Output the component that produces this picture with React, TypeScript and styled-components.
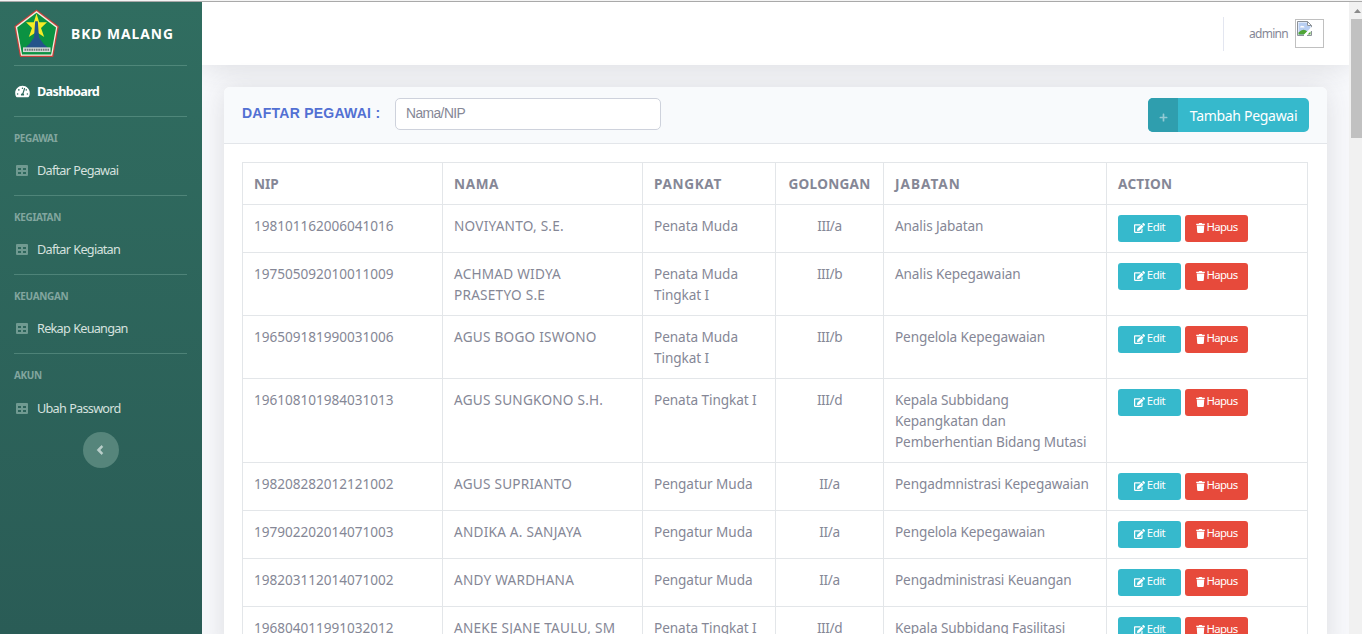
import React from 'react';
import styled, { createGlobalStyle } from 'styled-components';
import { FaTachometerAlt, FaAngleLeft, FaPlus, FaEdit, FaTrash } from 'react-icons/fa';

const GlobalStyle = createGlobalStyle`
  *, *::before, *::after { box-sizing: border-box; }
  html, body { margin: 0; padding: 0; overflow: hidden; }
  body { font-family: 'Noto Sans', 'Segoe UI', sans-serif; color: #858796; background: #f8f9fc; }
`;

const Page = styled.div`
  display: flex;
  width: 1362px;
  height: 634px;
  overflow: hidden;
  border-top: 1px solid #f4f4f4;
`;
const Window = styled.div`
  display: flex;
  flex: 1;
  min-width: 0;
  border-top: 1px solid #a9a9a9;
`;
const Sidebar = styled.nav`
  width: 202px;
  flex: none;
  padding: 0 15px 0 14px;
  color: #fff;
  background: linear-gradient(180deg, #306d60 0%, #2a5c56 100%);
`;
const Brand = styled.div`
  display: flex;
  align-items: center;
  height: 63px;
  gap: 12px;
  font-size: 13.8px;
  font-weight: 700;
  letter-spacing: 1px;
  white-space: nowrap;
`;
const BrandName = styled.span`
  line-height: 20px;
`;
const Divider = styled.div`
  height: 1px;
  background: rgba(140, 190, 175, 0.35);
`;
const NavItem = styled.a<{ $active?: boolean; $height: number }>`
  display: flex;
  align-items: center;
  height: ${(p) => p.$height}px;
  gap: 7px;
  padding-left: 1px;
  padding-bottom: ${(p) => (p.$active ? 0 : 2)}px;
  font-size: 12.7px;
  letter-spacing: ${(p) => (p.$active ? -0.7 : -0.75)}px;
  word-spacing: 0.6px;
  font-weight: ${(p) => (p.$active ? 700 : 400)};
  color: ${(p) => (p.$active ? '#fff' : '#d5e1df')};
  white-space: nowrap;
  svg {
    width: 15px;
    height: 13px;
    margin-top: ${(p) => (p.$active ? 0 : 2)}px;
    flex: none;
    color: ${(p) => (p.$active ? '#fff' : '#709a91')};
  }
`;
const Heading = styled.div`
  padding-top: 14px;
  height: 29px;
  font-size: 10px;
  line-height: 14px;
  font-weight: 700;
  letter-spacing: -0.35px;
  color: #82a69f;
`;
const Toggle = styled.button`
  display: flex;
  align-items: center;
  justify-content: center;
  width: 36px;
  height: 36px;
  margin: -2px auto 0;
  padding: 0 2px 0 0;
  border: 0;
  border-radius: 50%;
  background: #56857b;
  color: #b9cec9;
  svg { stroke: currentColor; stroke-width: 20px; }
`;
const Content = styled.main`
  flex: 1;
  min-width: 0;
  display: flex;
  flex-direction: column;
  background: #f8f9fc;
  overflow: hidden;
`;
const Topbar = styled.header`
  flex: none;
  height: 63px;
  display: flex;
  align-items: center;
  justify-content: flex-end;
  padding-right: 25px;
  background: #fff;
  box-shadow: 0 2px 28px rgba(58, 59, 69, 0.15);
`;
const UserBox = styled.div`
  display: flex;
  align-items: center;
  height: 34px;
  padding-left: 25px;
  gap: 7px;
  border-left: 1px solid #e3e6f0;
  font-size: 12px;
  letter-spacing: -0.72px;
`;
const UserName = styled.span`
  width: 39px;
`;
const Avatar = styled.span`
  width: 29px;
  height: 29px;
  padding: 1px;
  border: 1px solid #c0c0c0;
  svg { display: block; }
`;
const Card = styled.section`
  margin: 22px 22px 0;
  flex: none;
  border-radius: 6px 6px 0 0;
  background: #fff;
  box-shadow: 0 2px 28px rgba(58, 59, 69, 0.15);
`;
const CardHead = styled.div`
  display: flex;
  align-items: flex-start;
  height: 57px;
  padding: 11px 18px 0;
  background: #f8fafc;
  border-bottom: 1px solid #e3e6ea;
  border-radius: 6px 6px 0 0;
`;
const Title = styled.h6`
  margin: 0;
  width: 153px;
  font: 700 14px/31px 'Liberation Sans', Arial, sans-serif;
  letter-spacing: 0.25px;
  color: #5270d3;
  white-space: nowrap;
`;
const Search = styled.input`
  width: 266px;
  height: 32px;
  padding: 0 10px 2px;
  border: 1px solid #ced2dc;
  border-radius: 5px;
  background: #fff;
  font: 400 13.8px 'Liberation Sans', Arial, sans-serif;
  letter-spacing: -0.55px;
  &::placeholder { color: #858796; opacity: 1; }
`;
const AddButton = styled.button`
  display: flex;
  height: 34px;
  width: 161px;
  margin-left: auto;
  padding: 0;
  border: 0;
  border-radius: 5px;
  overflow: hidden;
  background: #36b9cc;
  color: #fff;
  font: 400 14px/36px 'Noto Sans', sans-serif;
  letter-spacing: -0.3px;
`;
const AddIcon = styled.span`
  display: flex;
  align-items: center;
  justify-content: center;
  width: 30px;
  height: 34px;
  padding-top: 5px;
  background: #2f9eae;
  color: #93cad4;
`;
const AddLabel = styled.span`
  flex: 1;
  text-align: center;
`;
const Table = styled.table`
  width: 1066px;
  margin: 18px 0 0 18px;
  table-layout: fixed;
  border-collapse: collapse;
  font-size: 13.6px;
  line-height: 21px;
`;
const Col = styled.col<{ $w: number }>`
  width: ${(p) => p.$w}px;
`;
const Th = styled.th<{ $center?: boolean; $spacing: number }>`
  padding: ${(p) => (p.$center ? '10px 0 10px' : '10px 11px')};
  border: 1px solid #e3e6e9;
  text-align: ${(p) => (p.$center ? 'center' : 'left')};
  letter-spacing: ${(p) => p.$spacing}px;
  font-weight: 700;
  white-space: nowrap;
`;
const Td = styled.td<{ $center?: boolean; $spacing?: number }>`
  padding: 10px 11px;
  border: 1px solid #e3e6e9;
  vertical-align: top;
  text-align: ${(p) => (p.$center ? 'center' : 'left')};
  letter-spacing: ${(p) => p.$spacing ?? 0}px;
  white-space: pre-line;
`;
const Actions = styled.div`
  display: flex;
  gap: 4px;
`;
const ActionButton = styled.button<{ $danger?: boolean }>`
  display: flex;
  align-items: center;
  justify-content: center;
  gap: 2px;
  width: 63px;
  height: 27px;
  padding: 0 0 3px;
  border: 0;
  border-radius: 3px;
  background: ${(p) => (p.$danger ? '#e74a3b' : '#36b9cc')};
  color: #fff;
  font: 400 11.4px/18px 'Noto Sans', sans-serif;
  letter-spacing: ${(p) => (p.$danger ? -0.7 : -0.5)}px;
  svg { width: ${(p) => (p.$danger ? 9 : 11)}px; height: 10px; margin-top: 2px; flex: none; }
`;
const Scrollbar = styled.div`
  width: 13px;
  flex: none;
  padding-left: 2px;
  background: #f1f1f1;
`;
const Arrow = styled.div`
  height: 17px;
  padding: 7px 0 0 3px;
  svg { display: block; }
`;
const Thumb = styled.div`
  height: 119px;
  background: #c1c1c1;
`;

const Logo = () => (
  <svg width="45" height="49" viewBox="0 0 45 48" preserveAspectRatio="none">
    <path d="M22.5 0.5 L44.8 17 L39.2 47 H6 L0.4 17 Z" fill="#c8413c" />
    <path d="M22.5 1.9 L43.4 17.5 L38.2 45.8 H7 L1.7 17.5 Z" fill="#f3eee0" />
    <path d="M22.5 3.6 L42 18.2 L37.1 44.5 H8 L3.2 18.2 Z" fill="#0b9242" />
    <path d="M22.5 4.5 L25.2 13 H33 L27 18.5 L30.2 27.5 L22.5 22.5 L14.8 27.5 L18 18.5 L12 13 H19.8 Z" fill="#f5ec26" />
    <path d="M21.2 12 H23.8 L25 28 L29.5 34 L35 39 H10 L15.5 34 L20 28 Z" fill="#24548a" />
    <rect x="9" y="37.6" width="27.5" height="4.6" fill="#d3dad7" />
    <path d="M10.5 40 H35" stroke="#6e7778" strokeWidth="2" strokeDasharray="1.6 0.7" />
  </svg>
);

const TableIcon = () => (
  <svg viewBox="0 0 15 13">
    <path
      fill="currentColor"
      fillRule="evenodd"
      d="M2 1 H12 Q13 1 13 2 V11 Q13 12 12 12 H2 Q1 12 1 11 V2 Q1 1 2 1 Z M3 4 V6 H6 V4 Z M8 4 V6 H11 V4 Z M3 8 V10 H6 V8 Z M8 8 V10 H11 V8 Z"
    />
  </svg>
);

const BrokenImage = () => (
  <svg width="16" height="16" viewBox="0 0 16 16">
    <path d="M0.5 0.5 H10.5 L14.5 4.5 V14.5 H0.5 Z" fill="#fff" />
    <path d="M1.5 1.5 H10 V5 H13.5 V8 L7.5 14 H1.5 Z" fill="#b9cff3" />
    <path d="M3 6.5 q0.5 -2.5 2.5 -1.5 q2 -0.5 2 1.5 Z" fill="#fff" />
    <path d="M1.5 13.5 V11.5 Q6 6.5 10.5 10.5 L7.5 13.5 Z" fill="#4fa536" />
    <path d="M13.5 10.5 V13.5 H10.5 Z" fill="#4fa536" />
    <path d="M7 14.5 H0.5 V0.5 H10.5 L14.5 4.5 V7 M10 14.5 H14.5 V10" fill="none" stroke="#8c9299" />
    <path d="M10.5 0.5 V4.5 H14.5 Z" fill="#fff" stroke="#8c9299" />
    <path d="M15.5 6.5 L7.5 14.5" stroke="#fff" strokeWidth="2" />
  </svg>
);

const sections = [
  { heading: 'PEGAWAI', item: 'Daftar Pegawai' },
  { heading: 'KEGIATAN', item: 'Daftar Kegiatan' },
  { heading: 'KEUANGAN', item: 'Rekap Keuangan' },
  { heading: 'AKUN', item: 'Ubah Password' },
];

const columns = [
  { label: 'NIP', width: 200, head: 0, body: -0.02 },
  { label: 'NAMA', width: 200, head: 0.6, body: 0.24 },
  { label: 'PANGKAT', width: 133, head: 0.65, body: -0.07 },
  { label: 'GOLONGAN', width: 108, head: 0.25, body: -0.4 },
  { label: 'JABATAN', width: 223, head: 1, body: -0.12 },
  { label: 'ACTION', width: 201, head: 0.25, body: 0 },
];

const rows = [
  ['198101162006041016', 'NOVIYANTO, S.E.', 'Penata Muda', 'III/a', 'Analis Jabatan'],
  ['197505092010011009', 'ACHMAD WIDYA\nPRASETYO S.E', 'Penata Muda\nTingkat I', 'III/b', 'Analis Kepegawaian'],
  ['196509181990031006', 'AGUS BOGO ISWONO', 'Penata Muda\nTingkat I', 'III/b', 'Pengelola Kepegawaian'],
  ['196108101984031013', 'AGUS SUNGKONO S.H.', 'Penata Tingkat I', 'III/d', 'Kepala Subbidang\nKepangkatan dan\nPemberhentian Bidang Mutasi'],
  ['198208282012121002', 'AGUS SUPRIANTO', 'Pengatur Muda', 'II/a', 'Pengadmnistrasi Kepegawaian'],
  ['197902202014071003', 'ANDIKA A. SANJAYA', 'Pengatur Muda', 'II/a', 'Pengelola Kepegawaian'],
  ['198203112014071002', 'ANDY WARDHANA', 'Pengatur Muda', 'II/a', 'Pengadministrasi Keuangan'],
  ['196804011991032012', 'ANEKE SJANE TAULU, SM', 'Penata Tingkat I', 'III/d', 'Kepala Subbidang Fasilitasi'],
];

export default function App() {
  return (
    <>
      <GlobalStyle />
      <Page>
        <Window>
          <Sidebar>
            <Brand>
              <Logo />
              <BrandName>BKD MALANG</BrandName>
            </Brand>
            <Divider />
            <NavItem $active $height={50}>
              <FaTachometerAlt />
              Dashboard
            </NavItem>
            {sections.map((s, i) => (
              <React.Fragment key={s.heading}>
                <Divider />
                <Heading>{s.heading}</Heading>
                <NavItem $height={i === sections.length - 1 ? 51 : 49}>
                  <TableIcon />
                  {s.item}
                </NavItem>
              </React.Fragment>
            ))}
            <Toggle>
              <FaAngleLeft size={14} />
            </Toggle>
          </Sidebar>
          <Content>
            <Topbar>
              <UserBox>
                <UserName>adminn</UserName>
                <Avatar>
                  <BrokenImage />
                </Avatar>
              </UserBox>
            </Topbar>
            <Card>
              <CardHead>
                <Title>DAFTAR PEGAWAI :</Title>
                <Search placeholder="Nama/NIP" />
                <AddButton>
                  <AddIcon>
                    <FaPlus size={9} />
                  </AddIcon>
                  <AddLabel>Tambah Pegawai</AddLabel>
                </AddButton>
              </CardHead>
              <Table>
                <colgroup>
                  {columns.map((c) => (
                    <Col key={c.label} $w={c.width} />
                  ))}
                </colgroup>
                <thead>
                  <tr>
                    {columns.map((c, i) => (
                      <Th key={c.label} $center={i === 3} $spacing={c.head}>{c.label}</Th>
                    ))}
                  </tr>
                </thead>
                <tbody>
                  {rows.map((r) => (
                    <tr key={r[0]}>
                      {r.map((c, i) => (
                        <Td key={i} $center={i === 3} $spacing={columns[i].body}>{c}</Td>
                      ))}
                      <Td>
                        <Actions>
                          <ActionButton><FaEdit />Edit</ActionButton>
                          <ActionButton $danger><FaTrash />Hapus</ActionButton>
                        </Actions>
                      </Td>
                    </tr>
                  ))}
                </tbody>
              </Table>
            </Card>
          </Content>
          <Scrollbar>
            <Arrow>
              <svg width="7" height="4" viewBox="0 0 7 4"><path d="M0 4 L3.5 0 L7 4 Z" fill="#8b8b8b" /></svg>
            </Arrow>
            <Thumb />
          </Scrollbar>
        </Window>
      </Page>
    </>
  );
}
